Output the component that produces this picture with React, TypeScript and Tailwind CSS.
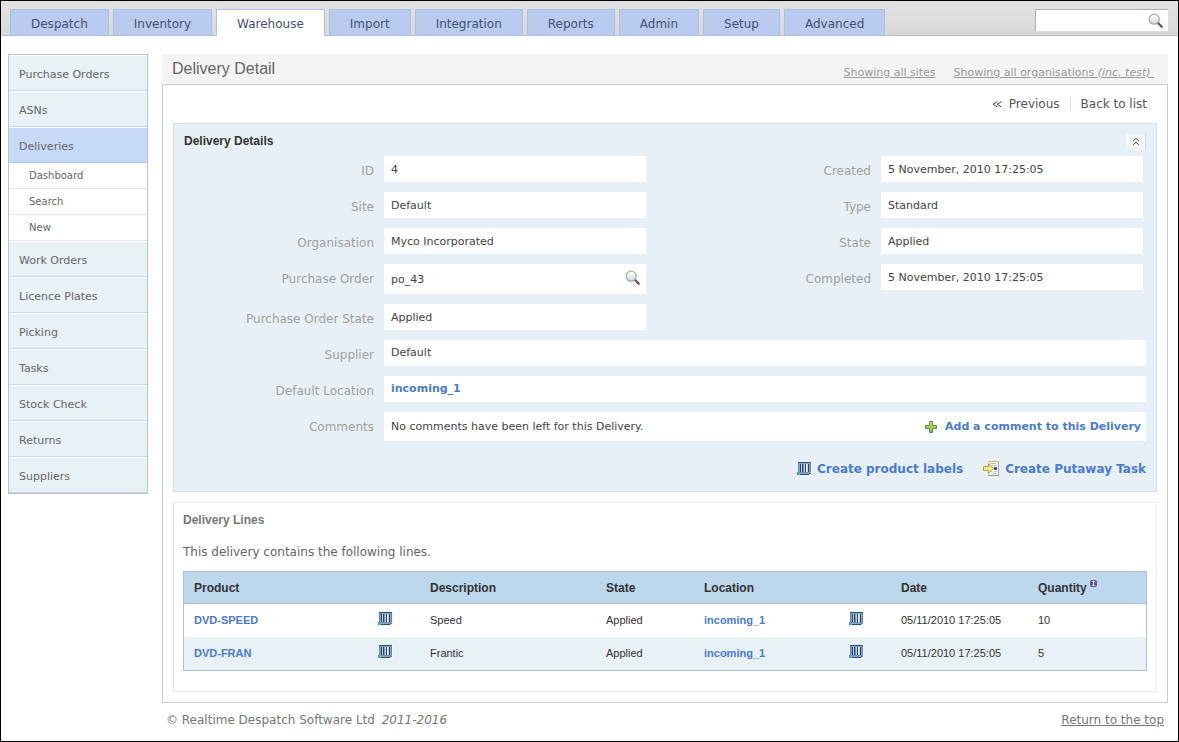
const tabs = [
  "Despatch",
  "Inventory",
  "Warehouse",
  "Import",
  "Integration",
  "Reports",
  "Admin",
  "Setup",
  "Advanced",
];

const navItems = [
  { label: "Purchase Orders" },
  { label: "ASNs" },
  { label: "Deliveries", children: ["Dashboard", "Search", "New"] },
  { label: "Work Orders" },
  { label: "Licence Plates" },
  { label: "Picking" },
  { label: "Tasks" },
  { label: "Stock Check" },
  { label: "Returns" },
  { label: "Suppliers" },
];

const lines = [
  {
    product: "DVD-SPEED",
    description: "Speed",
    state: "Applied",
    location: "incoming_1",
    date: "05/11/2010 17:25:05",
    quantity: 10,
  },
  {
    product: "DVD-FRAN",
    description: "Frantic",
    state: "Applied",
    location: "incoming_1",
    date: "05/11/2010 17:25:05",
    quantity: 5,
  },
];

function SearchIcon() {
  return (
    <svg className="block" width="16" height="16" viewBox="0 0 16 16" aria-hidden="true">
      <defs>
        <linearGradient id="lens" x1="0" y1="0" x2="0" y2="1">
          <stop offset="0" stopColor="#ffffff" />
          <stop offset="1" stopColor="#cfdde6" />
        </linearGradient>
        <linearGradient id="rim" x1="0" y1="0" x2="0" y2="1">
          <stop offset="0" stopColor="#c2b280" />
          <stop offset="1" stopColor="#98a2ad" />
        </linearGradient>
      </defs>
      <path d="M10.4 10.4 13.6 13.6" stroke="#7a5248" strokeWidth="2.2" strokeLinecap="square" />
      <circle cx="6.2" cy="6.2" r="5" fill="url(#lens)" stroke="url(#rim)" strokeWidth="1.3" />
    </svg>
  );
}

function BarcodeIcon() {
  return (
    <svg className="block" width="15" height="14" viewBox="0 0 15 14" aria-hidden="true">
      <rect x="1" y="0" width="14" height="14" fill="#f3f7fa" />
      <rect x="1" y="0" width="13" height="12" rx="1" fill="#8ea5be" />
      <path d="M1 2V1a1 1 0 0 1 1-1h11a1 1 0 0 1 1 1v1l-1-1H2z" fill="#24507f" />
      <path d="M1.5 2v8M13.5 2v8" stroke="#6a87a8" />
      <rect x="3" y="2" width="9" height="8" fill="#c3d0de" />
      <path d="M3.5 2v8M8.5 2v8M11.5 2v8" stroke="#1c4470" />
      <path d="M5.5 2v8" stroke="#1c4470" />
      <path d="M6.5 2v8" stroke="#7f99b5" />
      <path d="M9.5 2v8" stroke="#f2f6fa" />
      <path d="M2 10.5h11" stroke="#7790ad" />
      <path d="M3 12.5h9l1.5-1.5" fill="none" stroke="#264d78" />
      <path d="M0 13v-3h1l2 3z" fill="#27a3dc" />
    </svg>
  );
}

function PlusIcon() {
  return (
    <svg className="block" width="12" height="12" viewBox="0 0 12 12" aria-hidden="true">
      <defs>
        <linearGradient id="plus" x1="0" y1="0" x2="0" y2="1">
          <stop offset="0" stopColor="#d3e35c" />
          <stop offset="1" stopColor="#8fbc3c" />
        </linearGradient>
      </defs>
      <path d="M4.5.5h3v4h4v3h-4v4h-3v-4h-4v-3h4z" fill="url(#plus)" stroke="#4c9160" />
    </svg>
  );
}

function PutawayIcon() {
  return (
    <svg className="block" width="16" height="16" viewBox="0 0 16 16" aria-hidden="true">
      <rect x="5" y="0" width="11" height="15" fill="#fbfaf2" />
      <path d="M5 .5h10.5" stroke="#cdb467" />
      <path d="M15.5 0v15" stroke="#a9a48a" />
      <path d="M5 14.5h11" stroke="#8d98a0" />
      <path d="M7 2.5h6M9 4.5h5M11 10.5h3M9 12.5h5" stroke="#b3bfdc" />
      <path d="M11 6.5h3M11 8.5h3" stroke="#3c6fa8" />
      <path d="M11 7.5h3" stroke="#1f4a80" />
      <path d="M.5 5.5h5v-3l5 5-5 5v-3h-5z" fill="#fdec96" stroke="#c9952a" />
    </svg>
  );
}

function ChevronsUp() {
  return (
    <svg className="block" width="8" height="9" viewBox="0 0 8 9" fill="none" stroke="#444" aria-hidden="true">
      <path d="M1 4.2 4 1.2l3 3M1 8.2l3-3 3 3" />
    </svg>
  );
}

function ChevronsLeft() {
  return (
    <svg className="block" width="11" height="7" viewBox="0 0 11 7" fill="none" stroke="#444" aria-hidden="true">
      <path d="M5.5.6 1 3.3 5.5 6M9.5.6 5 3.3 9.5 6" />
    </svg>
  );
}

function InfoIcon() {
  return (
    <svg className="block" width="7" height="7" viewBox="0 0 7 7" aria-hidden="true">
      <rect width="7" height="7" rx="2" fill="#6450a8" />
      <path d="M2 1.5h3M3.5 1.5v4M2 5.5h3" stroke="#fff" />
    </svg>
  );
}

function Field({
  label,
  wide,
  narrowLabel,
  children,
}: {
  label: string;
  wide?: boolean;
  narrowLabel?: boolean;
  children: React.ReactNode;
}) {
  return (
    <div className="mb-[10px] flex gap-[10px]">
      <dt
        className={`shrink-0 pt-[6px] text-right text-[12px] leading-[18px] text-[#a0a0a0] ${
          narrowLabel ? "w-[100px]" : "w-[190px]"
        }`}
      >
        {label}
      </dt>
      <dd
        className={`flex min-h-[26px] items-center justify-between bg-white px-[7px] text-[11px] text-[#444] ${
          wide ? "flex-1 leading-[16px]" : "w-[262px] pt-[2px] leading-[16px]"
        }`}
      >
        {children}
      </dd>
    </div>
  );
}

function SideNav() {
  return (
    <nav className="w-[140px] shrink-0 self-start border border-[#bfc3c6] text-[#666]">
      <ul>
        {navItems.map((item) => (
          <li key={item.label}>
            <a
              href="#"
              className={`block h-[36px] border-t border-b border-t-white pt-[11px] pl-[10px] text-[11px] leading-[16px] ${
                item.children ? "border-b-[#aec4e2] bg-[#c6d9f6]" : "border-b-[#c5d8ea] bg-[#e7f1f6]"
              }`}
            >
              {item.label}
            </a>
            {item.children && (
              <ul>
                {item.children.map((child) => (
                  <li key={child}>
                    <a
                      href="#"
                      className="block h-[26px] border-b border-[#e8e8e8] bg-white pt-[5px] pl-[20px] text-[10px] leading-[16px]"
                    >
                      {child}
                    </a>
                  </li>
                ))}
              </ul>
            )}
          </li>
        ))}
      </ul>
    </nav>
  );
}

function DeliveryDetails() {
  return (
    <section className="border border-[#d3e0ea] bg-[#e7f0f6] px-[10px] pt-[8px] pb-[12px]">
      <div className="mb-[6px] flex items-start justify-between">
        <h2 className="font-['Liberation_Sans',sans-serif] text-[12px] leading-[18px] font-bold text-[#333]">
          Delivery Details
        </h2>
        <button
          type="button"
          aria-label="Collapse"
          className="mt-[2px] flex h-[14px] w-[20px] items-center justify-center border-r border-[#d3dbe2] bg-[#f4f8fb]"
        >
          <ChevronsUp />
        </button>
      </div>

      <dl>
        <div className="flex justify-between">
          <div>
            <Field label="ID">4</Field>
            <Field label="Site">Default</Field>
            <Field label="Organisation">Myco Incorporated</Field>
            <Field label="Purchase Order">
              po_43
              <button type="button" aria-label="Look up purchase order" className="-mr-[2px] pt-[4px] pb-[8px]">
                <SearchIcon />
              </button>
            </Field>
            <Field label="Purchase Order State">Applied</Field>
          </div>
          <div className="mr-[3px]">
            <Field label="Created" narrowLabel>
              5 November, 2010 17:25:05
            </Field>
            <Field label="Type" narrowLabel>
              Standard
            </Field>
            <Field label="State" narrowLabel>
              Applied
            </Field>
            <Field label="Completed" narrowLabel>
              5 November, 2010 17:25:05
            </Field>
          </div>
        </div>
        <Field label="Supplier" wide>
          Default
        </Field>
        <Field label="Default Location" wide>
          <a href="#" className="font-bold text-[#4a7bd0]">
            incoming_1
          </a>
        </Field>
        <Field label="Comments" wide>
          No comments have been left for this Delivery.
          <a href="#" className="-mr-[2px] flex items-center gap-[8px] pt-[7px] pb-[6px] font-bold text-[#4a7bd0]">
            <PlusIcon />
            Add a comment to this Delivery
          </a>
        </Field>
      </dl>

      <div className="flex justify-end gap-[20px] pt-[8px] text-[12px] leading-[20px] font-bold text-[#4a7bd0]">
        <a href="#" className="flex items-center gap-[5px]">
          <BarcodeIcon />
          Create product labels
        </a>
        <a href="#" className="flex items-center gap-[6px]">
          <PutawayIcon />
          Create Putaway Task
        </a>
      </div>
    </section>
  );
}

function DeliveryLines() {
  return (
    <section className="mt-[10px] border border-[#ececec] px-[9px] pt-[8px] pb-[20px]">
      <h2 className="font-['Liberation_Sans',sans-serif] text-[12px] leading-[18px] font-bold text-[#777]">
        Delivery Lines
      </h2>
      <p className="mt-[14px] mb-[10px] text-[12px] leading-[18px] text-[#666]">
        This delivery contains the following lines.
      </p>
      <table className="w-full table-fixed border-separate border-spacing-0 border border-[#b3bcd8] text-left font-['Liberation_Sans',sans-serif] text-[11px] leading-[16px] text-[#333]">
        <colgroup>
          <col className="w-[184px]" />
          <col className="w-[52px]" />
          <col className="w-[176px]" />
          <col className="w-[98px]" />
          <col className="w-[145px]" />
          <col className="w-[52px]" />
          <col className="w-[137px]" />
          <col className="w-[118px]" />
        </colgroup>
        <thead className="bg-[#bdd7ec] text-[12px]">
          <tr>
            {["Product", "", "Description", "State", "Location", "", "Date"].map((head, i) => (
              <th className="h-[32px] border-b border-[#b0bcd8] px-[10px]" key={i}>
                {head}
              </th>
            ))}
            <th className="h-[32px] border-b border-[#b0bcd8] px-[10px]">
              <span className="flex items-start gap-[3px]">
                Quantity
                <InfoIcon />
              </span>
            </th>
          </tr>
        </thead>
        <tbody>
          {lines.map((line) => (
            <tr className="even:bg-[#e7f1f6]" key={line.product}>
              <td className="h-[33px] px-[10px] pb-[2px]">
                <a href="#" className="font-bold text-[#4a7bd0]">
                  {line.product}
                </a>
              </td>
              <td className="px-[10px] pb-[4px]">
                <a href="#" aria-label="Print product label">
                  <BarcodeIcon />
                </a>
              </td>
              <td className="px-[10px] pb-[2px]">{line.description}</td>
              <td className="px-[10px] pb-[2px]">{line.state}</td>
              <td className="px-[10px] pb-[2px]">
                <a href="#" className="font-bold text-[#4a7bd0]">
                  {line.location}
                </a>
              </td>
              <td className="px-[10px] pb-[4px]">
                <a href="#" aria-label="Print location label">
                  <BarcodeIcon />
                </a>
              </td>
              <td className="px-[10px] pb-[2px]">{line.date}</td>
              <td className="px-[10px] pb-[2px]">{line.quantity}</td>
            </tr>
          ))}
        </tbody>
      </table>
    </section>
  );
}

export default function App() {
  return (
    <div className="min-h-screen border border-black bg-white font-['DejaVu_Sans',sans-serif]">
      <header className="flex h-[35px] items-end justify-between border-b border-[#bcbcbc] bg-linear-to-b from-[#e2e2e2] to-[#d9d9d9] pr-[10px] pl-[9px]">
        <nav className="-mb-px flex gap-[4px]">
          {tabs.map((tab) => (
            <a
              key={tab}
              href="#"
              className={`h-[27px] border px-[20px] pt-[5px] text-[12px] leading-[18px] text-[#44526c] ${
                tab === "Warehouse"
                  ? "border-[#a9bfe4] border-b-white bg-white"
                  : "border-[#a9bfe4] bg-[#bacbf0]"
              }`}
            >
              {tab}
            </a>
          ))}
        </nav>
        <form className="mb-[4px] flex h-[22px] w-[133px] items-center border-t border-l border-[#b0b0b0] bg-white pr-[4px]">
          <input type="text" aria-label="Search" className="min-w-0 flex-1 px-1 text-[11px] outline-none" />
          <button type="submit" aria-label="Go">
            <SearchIcon />
          </button>
        </form>
      </header>

      <div className="flex gap-[14px] pt-[18px] pr-[10px] pl-[7px]">
        <SideNav />
        <div className="min-w-0 flex-1">
          <div className="flex h-[30px] items-center justify-between bg-[#f4f4f4] pr-[14px] pl-[10px]">
            <h1 className="font-['Liberation_Sans',sans-serif] text-[16px] leading-[24px] text-[#666]">
              Delivery Detail
            </h1>
            <div className="flex gap-[18px] pt-[7px] text-[11px] leading-[16px] text-[#999]">
              <a href="#" className="underline">
                Showing all sites
              </a>
              <a href="#" className="underline">
                Showing all organisations <em>(inc. test)</em>&nbsp;
              </a>
            </div>
          </div>

          <main className="border border-[#ccc] px-[10px] pb-[10px]">
            <div className="flex h-[38px] items-center justify-end gap-[10px] pr-[10px] text-[12px] leading-[18px] text-[#555]">
              <a href="#" className="flex items-center gap-[6px]">
                <ChevronsLeft />
                Previous
              </a>
              <span className="h-[12px] w-px bg-[#ddd]" />
              <a href="#">Back to list</a>
            </div>
            <DeliveryDetails />
            <DeliveryLines />
          </main>

          <footer className="flex justify-between px-[4px] pt-[8px] text-[12px] leading-[18px] text-[#777]">
            <p>
              © Realtime Despatch Software Ltd <em className="ml-[3px]">2011-2016</em>
            </p>
            <a href="#" className="underline">
              Return to the top
            </a>
          </footer>
        </div>
      </div>
    </div>
  );
}
